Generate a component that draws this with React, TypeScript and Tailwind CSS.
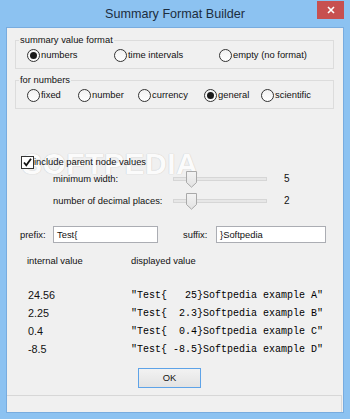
import React from "react";

function Radio({ checked, label, className }: { checked?: boolean; label: string; className?: string }) {
  return (
    <div className={`flex items-center h-[14px] ${className ?? ""}`}>
      <span className="flex items-center justify-center w-[13px] h-[13px] rounded-full border border-[#333333] bg-gradient-to-b from-[#f2f2f2] to-white shrink-0">
        {checked && <span className="w-[7px] h-[7px] rounded-full bg-[#1a1a1a]" />}
      </span>
      <span className="ml-[1px] text-[9.4px] leading-[14px] whitespace-nowrap">{label}</span>
    </div>
  );
}

function Thumb() {
  return (
    <svg width="11" height="17" viewBox="0 0 11 17" className="absolute left-[13px] top-[1px]">
      <defs>
        <linearGradient id="tg" x1="0" y1="0" x2="0" y2="1">
          <stop offset="0" stopColor="#f3f3f3" />
          <stop offset="1" stopColor="#e2e2e2" />
        </linearGradient>
      </defs>
      <path d="M0.5 0.5 H10.5 V11.5 L5.5 16.2 L0.5 11.5 Z" fill="url(#tg)" stroke="#a9a9a9" strokeWidth="1" />
    </svg>
  );
}

function SliderRow({ label, value, className }: { label: string; value: string; className: string }) {
  return (
    <div className={`flex items-center h-[17px] ml-[46px] ${className}`}>
      <span className="w-[120px] text-[9.4px] leading-[14px] whitespace-nowrap">{label}</span>
      <div className="relative w-[94px] h-[17px] flex items-center">
        <div className="w-full h-[4px] bg-[#e7e7e7] border border-[#d6d6d6]" />
        <Thumb />
      </div>
      <span className="ml-[17px] text-[10px] leading-[14px]">{value}</span>
    </div>
  );
}

const rows = [
  ["24.56", '"Test{   25}Softpedia example A"'],
  ["2.25", '"Test{  2.3}Softpedia example B"'],
  ["0.4", '"Test{  0.4}Softpedia example C"'],
  ["-8.5", '"Test{ -8.5}Softpedia example D"'],
];

export default function App() {
  return (
    <div className="w-[350px] h-[419px] bg-[#8cc2f1] flex flex-col font-['Liberation_Sans',sans-serif] text-[#111111]">
      <div className="relative h-[27px] flex items-center justify-center">
        <span className="text-[12.6px] leading-[16px] text-[#1c2d3e] mt-[1px]">Summary Format Builder</span>
        <div className="absolute right-[6px] top-[1px] w-[27px] h-[18px] bg-[#c75050] flex items-center justify-center">
          <svg width="8" height="8" viewBox="0 0 8 8">
            <path d="M1 1 L7 7 M7 1 L1 7" stroke="white" strokeWidth="1.6" />
          </svg>
        </div>
      </div>
      <div className="ml-[6px] w-[338px] h-[386px] border border-[#78acdf]">
        <div className="relative w-[336px] h-[384px] bg-[#f0f0f0] flex flex-col">
          <fieldset className="ml-[8px] mt-[5px] w-[319px] border border-[#dcdcdc] pb-[6px] min-w-0">
            <legend className="ml-[3px] px-[1px] text-[9.4px] leading-[14px]">summary value format</legend>
            <div className="flex pl-[11px] pt-[1px]">
              <Radio checked label="numbers" className="w-[87px]" />
              <Radio label="time intervals" className="w-[105px]" />
              <Radio label="empty (no format)" />
            </div>
          </fieldset>
          <fieldset className="ml-[8px] mt-[4px] w-[319px] border border-[#dcdcdc] pb-[6px] min-w-0">
            <legend className="ml-[3px] px-[1px] text-[9.4px] leading-[14px]">for numbers</legend>
            <div className="flex pl-[11px] pt-[1px]">
              <Radio label="fixed" className="w-[51px]" />
              <Radio label="number" className="w-[60px]" />
              <Radio label="currency" className="w-[66px]" />
              <Radio checked label="general" className="w-[57px]" />
              <Radio label="scientific" />
            </div>
          </fieldset>

          <span className="absolute left-[15px] top-[121px] text-[30px] leading-[30px] font-bold tracking-[0.5px] font-['Liberation_Sans',sans-serif] text-[#fbfbfb] [text-shadow:0_0_1px_#c9c9c9,0_0_1px_#d6d6d6] select-none">
            SOFTPEDIA
          </span>

          <div className="relative flex items-center h-[14px] mt-[46px] ml-[14px]">
            <span className="flex items-center justify-center w-[13px] h-[13px] border border-[#333333] bg-white shrink-0">
              <svg width="11" height="11" viewBox="0 0 11 11">
                <path d="M2 5.5 L4.3 8.3 L9 1.8" fill="none" stroke="#111" strokeWidth="1.8" />
              </svg>
            </span>
            <span className="text-[9.4px] leading-[14px] whitespace-nowrap">include parent node values</span>
          </div>

          <SliderRow label="minimum width:" value="5" className="mt-[1px] relative" />
          <SliderRow label="number of decimal places:" value="2" className="mt-[5px] relative" />

          <div className="flex items-center h-[17px] mt-[17px] ml-[13px]">
            <span className="w-[33px] text-[9.4px] leading-[14px]">prefix:</span>
            <div className="w-[105px] h-[17px] border border-[#abadb3] bg-white flex items-center pl-[3px] text-[9.4px] leading-[14px]">Test{"{"}</div>
            <span className="ml-[25px] w-[33px] text-[9.4px] leading-[14px]">suffix:</span>
            <div className="w-[110px] h-[17px] border border-[#abadb3] bg-white flex items-center pl-[3px] text-[9.4px] leading-[14px]">{"}"}Softpedia</div>
          </div>

          <div className="flex items-center h-[14px] mt-[11px] ml-[20px] text-[9.4px] leading-[14px]">
            <span className="w-[104px]">internal value</span>
            <span>displayed value</span>
          </div>

          <div className="flex flex-col mt-[18px] ml-[20px]">
            {rows.map(([v, d]) => (
              <div key={v} className="flex items-center h-[18px]">
                <span className="w-[104px] text-[10.8px] leading-[14px] pl-[1px]">{v}</span>
                <span className="whitespace-pre text-[10px] leading-[12px] mt-[2px] font-['Liberation_Mono',monospace] text-[#000]">{d}</span>
              </div>
            ))}
          </div>

          <div className="mt-[10px] ml-[131px] w-[63px] h-[20px] border border-[#5ea3e8] bg-gradient-to-b from-[#f2f2f2] to-[#e3e3e3] flex items-center justify-center text-[9.4px] leading-[14px]">
            OK
          </div>

          <div className="mt-auto h-[17px] border-t border-[#d7d7d7] border-r border-r-[#d9d9d9] mr-[1px]" />
        </div>
      </div>
    </div>
  );
}
